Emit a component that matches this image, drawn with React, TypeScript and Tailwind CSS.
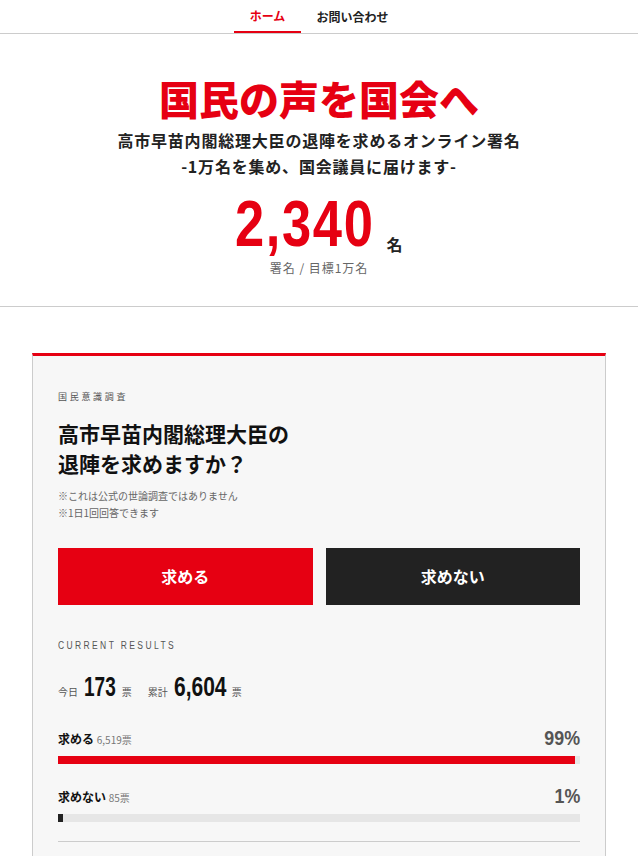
import React from 'react';

const jp = "font-['Noto_Sans_CJK_JP',sans-serif]";
// no condensed face installed: squeeze Liberation Sans Bold horizontally
const num = "inline-block font-['Liberation_Sans',sans-serif] font-bold";

const results = [
   { label: '求める', votes: '6,519票', pct: 99, bar: 'bg-[#e60012]' },
   { label: '求めない', votes: '85票', pct: 1, bar: 'bg-[#222]' },
];

export default function App() {
   return (
      <div className={`min-h-[856px] bg-white text-[#222] ${jp}`}>
         {/* nav */}
         <nav className="flex justify-center border-b border-[#ccc] h-[34px]">
            <div className="flex">
               <a className="w-[67px] flex items-center justify-center text-[12px] font-bold text-[#e60012] border-b-2 border-[#e60012]">ホーム</a>
               <a className="w-[103px] flex items-center justify-center text-[12px] font-bold text-[#222]">お問い合わせ</a>
            </div>
         </nav>

         {/* hero */}
         <header className="flex flex-col items-center border-b border-[#ccc] pt-[40px] pb-[29px]">
            <h1 className="text-[40px] leading-[48px] font-black text-[#e60012]">国民の声を国会へ</h1>
            <p className="mt-[5px] text-[16px] leading-[26px] font-bold text-center tracking-[0.05em]">
               高市早苗内閣総理大臣の退陣を求めるオンライン署名<br />-1万名を集め、国会議員に届けます-
            </p>
            <div className="flex items-end mt-[15px]">
               <span className={`${num} text-[64px] leading-[60px] text-[#e60012] tracking-[2px] scale-x-[0.82] origin-left mr-[-28px]`}>2,340</span>
               <span className="text-[16px] font-bold ml-[9px] mb-[-2px]">名</span>
            </div>
            <p className="mt-[5px] text-[12px] text-[#666] tracking-[0.08em]">署名 / 目標1万名</p>
         </header>

         {/* poll card */}
         <section className="mt-[46px] mx-[32px] bg-[#f7f7f7] border-t-[3px] border-t-[#e60012] border-x border-x-[#ccc] px-[25px] pt-[34px] pb-[30px]">
            <p className="text-[9px] text-[#555] tracking-[0.3em]">国民意識調査</p>
            <h2 className="mt-[14px] text-[21px] leading-[30px] font-bold text-[#111]">高市早苗内閣総理大臣の<br />退陣を求めますか？</h2>
            <div className="mt-[9px] text-[10px] leading-[17px] text-[#666]">
               <p>※これは公式の世論調査ではありません</p>
               <p>※1日1回回答できます</p>
            </div>

            <div className="grid grid-cols-2 gap-[13px] mt-[27px]">
               <button className="h-[57px] bg-[#e60012] text-white text-[16px] font-bold">求める</button>
               <button className="h-[57px] bg-[#222] text-white text-[16px] font-bold">求めない</button>
            </div>

            <p className="mt-[30px] h-[14px] leading-[14px]">
               <span className="inline-block font-['Liberation_Sans',sans-serif] text-[10px] text-[#555] tracking-[0.28em] scale-x-[0.85] origin-left whitespace-nowrap">CURRENT RESULTS</span>
            </p>
            <div className="flex items-baseline mt-[24px]">
               <span className="text-[10px] text-[#555]">今日</span>
               <span className={`${num} text-[28px] leading-[28px] text-[#111] ml-[6px] scale-x-[0.68] origin-left mr-[-14px]`}>173</span>
               <span className="text-[10px] text-[#555] ml-[5px]">票</span>
               <span className="text-[10px] text-[#555] ml-[16px]">累計</span>
               <span className={`${num} text-[28px] leading-[28px] text-[#111] ml-[6px] scale-x-[0.75] origin-left mr-[-17px]`}>6,604</span>
               <span className="text-[10px] text-[#555] ml-[5px]">票</span>
            </div>

            <div className="mt-[26px] flex flex-col gap-[21px]">
               {results.map((r) => (
                  <div key={r.label}>
                     <div className="flex items-end justify-between">
                        <p className="text-[12px] font-bold text-[#111] mb-[1px]">
                           {r.label} <span className="text-[10px] font-normal text-[#777]">{r.votes}</span>
                        </p>
                        <span className={`${num} text-[21px] leading-[22px] text-[#555] scale-x-[0.85] origin-right`}>{r.pct}%</span>
                     </div>
                     <div className="mt-[7px] h-[8px] bg-[#e6e6e6]">
                        <div className={`h-full ${r.bar}`} style={{ width: `${r.pct}%` }} />
                     </div>
                  </div>
               ))}
            </div>
            <div className="mt-[19px] border-t border-[#ccc]" />
         </section>
      </div>
   );
}
